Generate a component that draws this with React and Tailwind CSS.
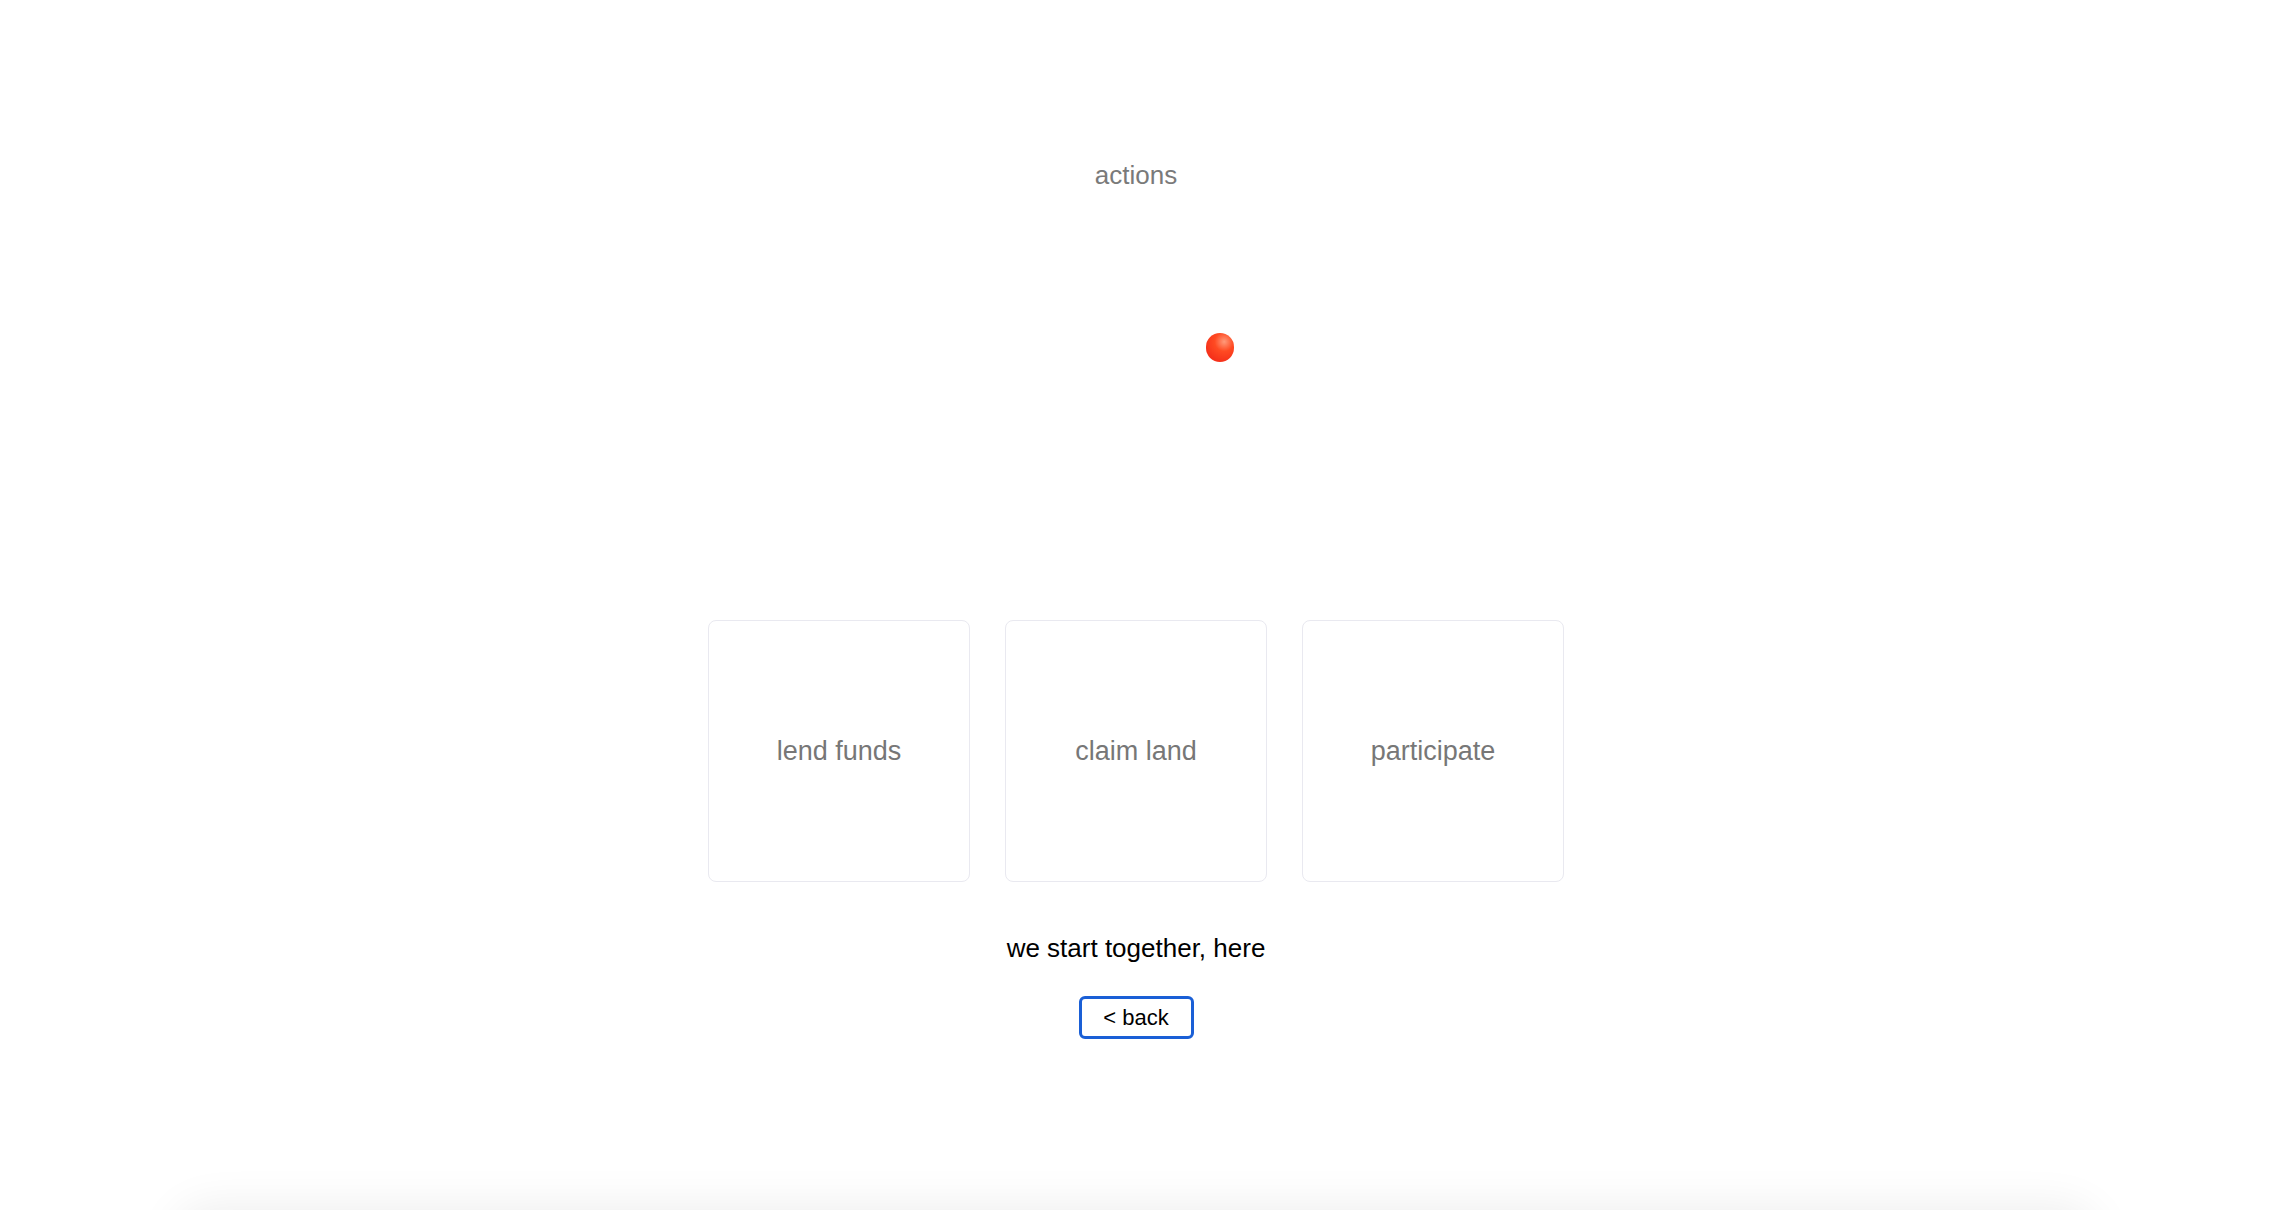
export default function App() {
  const cards = ["lend funds", "claim land", "participate"];
  return (
    <div
      className="relative h-[1210px] w-full overflow-hidden bg-white"
      style={{ fontFamily: '"Liberation Sans", Arial, sans-serif' }}
    >
      <div className="flex flex-col items-center pr-[20px]">
        <div className="mt-[158px] text-[26px] leading-[34px] text-[#7a7a7a]">actions</div>
        <div className="mt-[141px] ml-[168px] h-[29px] w-[28px] rounded-full bg-[radial-gradient(circle_at_65%_30%,#ff9a7a_0%,#ff4a22_35%,#f5301a_75%,#ff5a3a_100%)] blur-[0.4px]" />
        <div className="mt-[258px] flex gap-[35px]">
          {cards.map((c) => (
            <div
              key={c}
              className="flex h-[262px] w-[262px] items-center justify-center rounded-[8px] border border-[#e9e9f0] bg-white"
            >
              <span className="text-[27px] text-[#777777]">{c}</span>
            </div>
          ))}
        </div>
        <div className="mt-[50px] text-[26px] leading-[32px] text-black">we start together, here</div>
        <button className="mt-[32px] flex h-[43px] w-[115px] items-center justify-center rounded-[6px] border-[3px] border-[#1a5fd6] bg-white text-[22px] text-black">
          &lt; back
        </button>
      </div>
      <div className="absolute left-[190px] right-[210px] top-[1222px] h-[80px] rounded-[20px] bg-white shadow-[0_0_45px_16px_rgba(0,0,0,0.07)]" />
    </div>
  );
}
